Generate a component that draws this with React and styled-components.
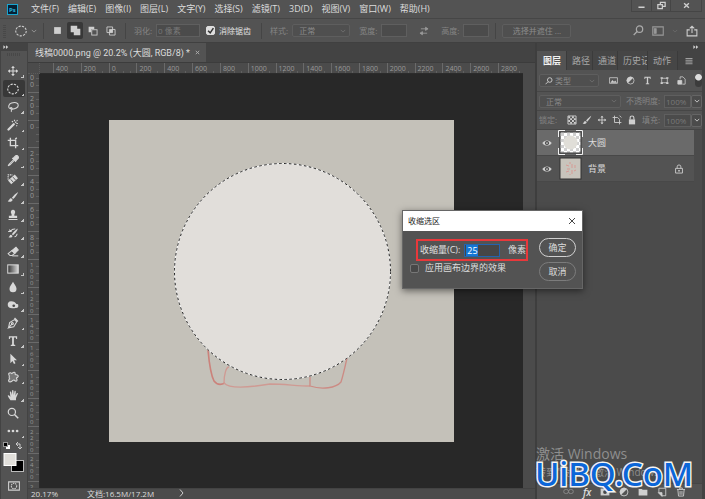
import React from 'react';
import styled, { createGlobalStyle } from 'styled-components';

const GlobalStyle = createGlobalStyle`
  * { box-sizing: border-box; }
  body {
    margin: 0;
    overflow: hidden;
    background: #535353;
    color: #dcdcdc;
    font-family: "Open Sans", "Noto Sans CJK SC", sans-serif;
    font-size: 9px;
    line-height: 12px;
  }
  button, input, select { font: inherit; color: inherit; margin: 0; padding: 0; }
  svg { display: block; flex: none; }
`;

/* shell */
const Shell = styled.div`
  height: 100vh;
  display: flex;
  flex-direction: column;
`;

const Main = styled.div`
  flex: 1;
  min-height: 0;
  display: flex;
  background: #434343;
`;

/* menu bar */
const MenuBar = styled.header`
  height: 19px;
  display: flex;
  align-items: center;
  padding-left: 7px;
  border-bottom: 1px solid #464646;
`;

const Menus = styled.nav`
  display: flex;
  gap: 9px;
  margin-left: 13px;
`;

const MenuItem = styled.button`
  border: 0;
  background: none;
  white-space: nowrap;
`;

const WindowButtons = styled.div`
  display: flex;
  align-self: flex-start;
  margin: 0 3px 0 auto;
  border: 1px solid #454545;
  border-top: 0;
`;

const WindowButton = styled.button`
  width: ${p => (p.$wide ? '31px' : '19px')};
  height: 11px;
  display: grid;
  place-items: center;
  border: 0;
  background: none;
  & + & { border-left: 1px solid #454545; }
`;

/* options bar */
const OptionsBar = styled.div`
  height: 24px;
  display: flex;
  align-items: center;
  padding: 0 6px 0 3px;
  border-bottom: 1px solid #404040;
  font-size: 8px;
  white-space: nowrap;
`;

const Grip = styled.span`
  width: ${p => (p.$across ? '14px' : '3px')};
  height: ${p => (p.$across ? '3px' : '14px')};
  background: repeating-linear-gradient(${p => (p.$across ? '90deg' : '0deg')}, #484848 0 1px, transparent 1px 2px);
`;

const Separator = styled.span`
  width: 1px;
  height: 16px;
  margin: 0 ${p => p.$right || 5}px 0 ${p => p.$left || 6}px;
  background: #454545;
`;

const Spacer = styled.span`
  width: ${p => p.$size || 9}px;
`;

const IconButton = styled.button`
  display: grid;
  place-items: center;
  width: ${p => p.$width || 16}px;
  height: 17px;
  border: 0;
  border-radius: 2px;
  background: ${p => (p.$on ? '#383838' : 'none')};
`;

const ButtonSet = styled.div`
  display: flex;
  align-items: center;
  gap: ${p => p.$gap || 2}px;
  margin-left: ${p => (p.$end ? 'auto' : 0)};
`;

const Label = styled.label`
  color: ${p => (p.$bright ? '#e0e0e0' : '#858585')};
  margin-right: 4px;
`;

const Field = styled.input`
  width: ${p => p.$width}px;
  height: 13px;
  padding-left: 1px;
  border: 1px solid #5f5f5f;
  background: #4b4b4b;
  color: #797979;
  outline: 0;
`;

const TickBox = styled.input`
  appearance: none;
  flex: none;
  width: 9px;
  height: 9px;
  border: 1px solid #777;
  border-radius: 2px;
  background: #484848;
  &:checked {
    border-color: #dedede;
    background: #dedede url("data:image/svg+xml,%3Csvg xmlns='http://www.w3.org/2000/svg' viewBox='0 0 8 8'%3E%3Cpath d='M1.5 4l2 2 3-4.500' fill='none' stroke='%23333' stroke-width='1.400'/%3E%3C/svg%3E") center / 8px no-repeat;
  }
`;

const SelectBox = styled.span`
  display: grid;
  align-items: center;
  width: ${p => p.$width}px;
  height: 13px;
  border: 1px solid #5e5e5e;
  border-radius: 2px;
  background: #4f4f4f;
  & > * { grid-area: 1 / 1; }
  & > svg { justify-self: end; margin-right: 3px; }
  & > svg:first-child:not(:last-child) { justify-self: start; margin-left: 5px; }
`;

const Select = styled.select`
  appearance: none;
  width: 100%;
  height: 11px;
  line-height: 11px;
  padding-left: ${p => p.$indent || 6}px;
  border: 0;
  background: none;
  color: #8b8b8b;
  font-size: 8px;
  opacity: 1;
`;

const MaskButton = styled.button`
  width: 69px;
  height: 14px;
  border: 1px solid #5e5e5e;
  border-radius: 2px;
  background: #4f4f4f;
  color: #8b8b8b;
`;

/* tool strip */
const ToolStrip = styled.aside`
  width: 27px;
  display: flex;
  flex-direction: column;
  align-items: center;
  background: #535353;
  border-left: 1px solid #434343;
  overflow: hidden;
`;

const StripHead = styled.div`
  align-self: stretch;
  height: 8px;
  margin-bottom: 2px;
  padding: 1px 2px;
  background: #434343;
`;

const Tools = styled.div`
  flex: 1;
  display: flex;
  flex-direction: column;
  justify-content: space-between;
  margin-top: 6px;
`;

const ToolButton = styled.button`
  width: 22px;
  height: 17px;
  display: grid;
  place-items: center;
  padding-right: 2px;
  border: 0;
  border-radius: 2px;
  background-color: ${p => (p.$on ? '#383838' : 'transparent')};
  background-image: linear-gradient(135deg, transparent 50%, #c5c5c5 50%);
  background-size: ${p => (p.$plain ? '0 0' : '3px 3px')};
  background-position: right 1px bottom 1px;
  background-repeat: no-repeat;
`;

const Swatches = styled.div`
  height: 60px;
  padding-top: 3px;
  display: flex;
  flex-direction: column;
  align-items: center;
  gap: 7px;
`;

/* document area */
const Workspace = styled.section`
  flex: 1;
  min-width: 0;
  display: flex;
  flex-direction: column;
  margin-left: 1px;
`;

const DocTabs = styled.div`
  height: 20px;
  display: flex;
  border-bottom: 1px solid #3c3c3c;
`;

const DocTab = styled.div`
  display: flex;
  align-items: center;
  gap: 5px;
  padding: 0 6px 0 7px;
  background: #535353;
  font-family: Roboto, "Noto Sans CJK SC", sans-serif;
  white-space: nowrap;
`;

const View = styled.div`
  flex: 1;
  min-height: 0;
  display: grid;
  grid-template: 11px 1fr 11px / 12px 1fr 12px;
  background: #4b4b4b;
`;

const RulerCorner = styled.div`
  border: 1px dotted #5c5c5c;
  border-width: 0 1px 1px 0;
`;

const TopRuler = styled.div`
  display: flex;
  overflow: hidden;
  border-bottom: 1px solid #2c2c2c;
  padding-left: 13px;
`;

const TopMark = styled.span`
  flex: none;
  width: calc((100% + 3px) / 17);
  padding-left: 2px;
  border-left: 1px solid #6a6a6a;
  color: #999;
  font-size: 7px;
  line-height: 11px;
  background: repeating-linear-gradient(90deg, transparent 0 6px, #606060 6px 7px) bottom / 100% 2px no-repeat;
`;

const SideRuler = styled.div`
  overflow: hidden;
  border-right: 1px solid #2c2c2c;
`;

const SideMarks = styled.div`
  display: flex;
  flex-direction: column;
  height: calc(100% + 31px);
  margin-top: -10px;
`;

const SideMark = styled.span`
  flex: 1;
  min-height: 0;
  display: flex;
  flex-direction: column;
  padding: 2px 0 0 2px;
  border-top: 1px solid #6a6a6a;
  color: #999;
  font-size: ${p => (p.$tight ? '6px' : '7px')};
  line-height: ${p => (p.$tight ? '6px' : '7px')};
  background: repeating-linear-gradient(transparent 0 6px, #606060 6px 7px) right / 3px 100% no-repeat;
`;

const Canvas = styled.div`
  display: grid;
  place-items: center;
  overflow: hidden;
  background: #282828;
`;

const StatusBar = styled.footer`
  grid-column: 1 / -1;
  display: flex;
  align-items: center;
  padding-left: 3px;
  border-top: 1px solid #434343;
  font-size: 8px;
  line-height: 10px;
`;

const StatusInfo = styled.span`
  display: flex;
  justify-content: space-between;
  width: 99px;
  margin-left: 29px;
`;

/* right panel */
const Panel = styled.aside`
  width: 170px;
  display: flex;
  flex-direction: column;
  border-left: 2px solid #3e3e3e;
  border-right: 3px solid #434343;
  background: #4b4b4b;
`;

const PanelHead = styled.div`
  height: 8px;
  display: flex;
  justify-content: flex-end;
  padding: 1px 3px;
  background: #434343;
`;

const PanelTabs = styled.div`
  height: 19px;
  display: flex;
  align-items: center;
  background: #434343;
`;

const PanelTab = styled.button`
  width: ${p => p.$width}px;
  height: 19px;
  padding-left: ${p => (p.$on ? 6 : 5)}px;
  border: 0;
  border-right: 1px solid #3b3b3b;
  background: ${p => (p.$on ? '#535353' : '#464646')};
  color: ${p => (p.$on ? '#f0f0f0' : '#a8a8a8')};
  font-weight: ${p => (p.$on ? 600 : 400)};
  text-align: left;
  white-space: nowrap;
  overflow: hidden;
`;

const PanelRow = styled.div`
  height: ${p => (p.$tall ? 22 : 19)}px;
  display: flex;
  align-items: center;
  justify-content: space-between;
  padding-left: 2px;
  border-bottom: 1px solid #464646;
  background: #535353;
  font-size: 8px;
  white-space: nowrap;
`;

const Amount = styled.div`
  display: flex;
  align-items: center;
`;

const DropButton = styled.button`
  width: 11px;
  height: 13px;
  display: grid;
  place-items: center;
  border: 1px solid #656565;
  border-radius: 2px;
  background: #4b4b4b;
`;

const FilterSwitch = styled.input`
  appearance: none;
  width: 7px;
  height: 13px;
  border-radius: 4px;
  background: radial-gradient(circle at 50% 3px, #ddd 3px, transparent 4px) #3c3c3c;
`;

const LayerList = styled.ul`
  flex: 1;
  margin: 0;
  padding: 0 8px 0 0;
  list-style: none;
`;

const Layer = styled.li`
  height: 26px;
  display: flex;
  align-items: center;
  padding: 0 10px 0 4px;
  border-bottom: 1px solid #484848;
  background: ${p => (p.$on ? '#6a6a6a' : '#535353')};
  & > span { margin: 0 auto 0 5px; }
`;

const EyeButton = styled(IconButton)`
  width: 11px;
  margin-right: 6px;
`;

const PanelFooter = styled.div`
  height: 16px;
  display: flex;
  align-items: center;
  justify-content: space-between;
  padding: 0 16px 0 26px;
  border-top: 1px solid #454545;
  background: #535353;
  & > i { font-size: 10px; font-weight: 600; }
`;

/* contract-selection dialog */
const Dialog = styled.form`
  position: absolute;
  left: 402px;
  top: 210px;
  width: 181px;
  border: 1px solid #666;
  background: #535353;
  box-shadow: 0 2px 7px rgba(0, 0, 0, 0.5);
`;

const DialogTitle = styled.div`
  height: 20px;
  display: flex;
  align-items: center;
  justify-content: space-between;
  padding: 0 6px 0 5px;
  background: #fff;
  color: #222;
  font-size: 8px;
`;

const DialogBody = styled.div`
  height: 57px;
  display: flex;
  justify-content: space-between;
  padding: 7px 6px 0 7px;
`;

const DialogButtons = styled.div`
  display: flex;
  flex-direction: column;
  gap: 5px;
`;

const PillButton = styled.button`
  width: 37px;
  height: 19px;
  border: 1px solid ${p => (p.$main ? '#d0d0d0' : '#7c7c7c')};
  border-radius: 10px;
  background: none;
`;

const AmountBox = styled.div`
  height: 22px;
  width: 112px;
  display: flex;
  align-items: center;
  margin: 1px 0 0 6px;
  padding-left: 2px;
  border: 2px solid #e8383b;
  & > span { margin-left: auto; }
`;

const AmountField = styled.input`
  width: 36px;
  height: 13px;
  padding-left: 2px;
  border: 1px solid #2463ae;
  background: linear-gradient(#1477d4, #1477d4) 1px 50% / 12px 11px no-repeat #464646;
  color: #fff;
  outline: 0;
`;

const TickRow = styled.div`
  display: flex;
  align-items: center;
  gap: 6px;
  margin-top: 1px;
`;

/* overlays */
const Activation = styled.div`
  position: absolute;
  left: 536px;
  top: 444px;
  color: rgba(190, 190, 190, 0.6);
  font-size: 14px;
  line-height: 19px;
  & > small { display: block; font-size: 10px; }
`;

const SiteMark = styled.div`
  position: absolute;
  left: 535px;
  top: 453px;
  color: #0b66d8;
  font-family: "Noto Sans", "Open Sans", sans-serif;
  font-size: 33px;
  font-weight: 500;
  line-height: 42px;
  -webkit-text-stroke: 3px #f4f4f4;
  paint-order: stroke fill;
  white-space: nowrap;
`;

const S = { fill: 'none', stroke: 'currentColor', strokeWidth: 1.4 };

const glyphs = {
  move: <g {...S}><path d="M8 2v12M2 8h12" /><path d="M5.500 4L8 1.200 10.500 4zM5.500 12L8 14.800 10.500 12zM4 5.500L1.200 8 4 10.500zM12 5.500L14.800 8 12 10.500z" fill="currentColor" strokeWidth="0" /></g>,
  ellipse: <ellipse cx="8" cy="8" rx="7" ry="6.500" {...S} strokeDasharray="3 1.600" />,
  lasso: <g {...S}><path d="M4.500 10.500C1 9 1.500 4.500 6 2.800s9-.500 9 2.700-4 5.500-8.500 5.300c-1.500 0-2.600-1-1.600-1.800s2.600.600 1.600 2.200-1.500 2.300-.500 3.300" /></g>,
  wand: <g {...S}><path d="M2 14L9 7" strokeWidth="3" strokeLinecap="round" /><path d="M11 5l1.500-1.500M10 1v2M14.500 6h-2M6.500 3l1.500 1M14 1.500l-1 1M13.500 9.500l-1-1" strokeWidth="1.600" /></g>,
  crop: <g {...S} strokeWidth="1.800"><path d="M4.500 1v10.500H15M1 4.500h10.500V15M13 1l-2 2" /></g>,
  dropper: <g {...S}><path d="M9 6l-6 6-1.500 2.500L4 13l6-6" /><path d="M7.500 4.500l4 4 1-1.500 2-2a2 2 0 0 0-3.500-3.500l-2 2z" fill="currentColor" /></g>,
  heal: <g {...S}><path d="M1.500 9V2.500h6" strokeDasharray="2 1" /><path d="M3.500 12.500L12.500 4.500" strokeWidth="6.500" /><path d="M5 8.500l3.500 4M8 5.500l3.500 4" stroke="#535353" strokeWidth="1.200" /></g>,
  brush: <g fill="currentColor"><path d="M14.800 1.200C12 3 8.500 6 6.500 9l1.800 1.600C11 8 14 4 14.800 1.200zM5.600 9.800C3 9.500 3.500 12.500 1 13.500c2.500 1.500 6 .800 6.500-2z" /></g>,
  stamp: <g fill="currentColor"><path d="M8 1a3 3 0 0 0-2.500 4.500C6.200 6.600 6.500 8 6 9H2.500v3h11V9H10c-.500-1-.200-2.400.500-3.500A3 3 0 0 0 8 1zM2 13.200h12v1.600H2z" /></g>,
  history: <g><path d="M14.500 2C11 4 8 7 6.500 9.500L8 11c3-2.500 5.500-5.500 6.500-9zM5.500 10.200C3.500 10 4 12.500 2 13.500c2.500 1 5 .500 5.300-1.600z" fill="currentColor" /><path d="M1.500 6h3.800L3 3.500M5 5.500c1-2 3-3 6-2.800M10 13c2 0 3-1.500 3.500-4" {...S} /></g>,
  eraser: <g {...S}><path d="M1.500 11.500l5-4 4 3.500-3.500 3H4z" /><path d="M6.500 7.500L12 3l3 3.500-4.500 4.500z" fill="currentColor" /><path d="M7 14.500h8" /></g>,
  gradient: <g><defs><linearGradient id="fade"><stop offset="0" stopColor="#333" /><stop offset="1" stopColor="#d8d8d8" /></linearGradient></defs><rect x="1" y="2.500" width="14" height="11" fill="url(#fade)" stroke="currentColor" strokeWidth="1.400" /></g>,
  drop: <path d="M8 1C6.500 4 3.300 7 3.300 10.300a4.700 4.700 0 0 0 9.400 0C12.700 7 9.500 4 8 1z" fill="currentColor" />,
  sponge: <g><path d="M5.500 3C2 3 .800 5.500 1 8c.200 3 3 4.500 6.500 4.300 3 0 7.500-.300 7.500-2.300V8c0-1-1-1.300-2.500-1.300C11.500 4.500 9 3 5.500 3z" fill="currentColor" /><circle cx="9" cy="9" r="1.800" fill="#484848" /></g>,
  pen: <g {...S}><path d="M2 14.500l1.500-7L10 3.500l3 3L9 13l-7 1.500 4.500-5" /><circle cx="7.200" cy="8.800" r="1.300" /><path d="M10 1.500L14.500 6" strokeWidth="2" /></g>,
  type: <path d="M2.500 1.500h11v3.800h-1.300l-.500-2H9.200v9.400l1.800.500v1.300H5v-1.300l1.800-.500V3.300H4.300l-.500 2H2.500z" fill="currentColor" />,
  arrow: <path d="M4.500 1v12.500l2.800-2.800 2 4 2-1-2-3.900h4z" fill="currentColor" />,
  shape: <path d="M2.500 5c-1-2.500 2-3.500 4-1.500C8 2 9 .800 10.500 2c1 1-.500 2.500 1 3 3-.500 4.500 2 2.500 3.500-2.500.500-1 2-.500 3.500-.500 2.500-3 1.500-4 0-2-.500-2 2.500-5 2.500s-3-2.500-1-4C2 9 4 7.500 2.500 5z" {...S} fill="#777" />,
  hand: <path d="M4.500 15C3.500 12 1 10.500 1 8.500c1.500-.800 2.500.500 3.500 2L3.800 4c.8-1.200 1.800-.500 2 .5L6.500 8l.300-6c.700-1.300 1.700-.700 1.800.300L9 8l1-5c.800-1 1.800-.500 1.700.5L11.300 9l1.700-3.500c1-.800 1.800 0 1.400 1L12 12v3z" fill="currentColor" />,
  zoom: <g {...S} strokeWidth="1.600"><circle cx="6.500" cy="6.500" r="4.800" /><path d="M10 10l5 5" strokeWidth="2" /></g>,
  find: <g {...S} strokeWidth="1.800"><circle cx="9.500" cy="6" r="4.600" /><path d="M6 9.500L1 14.500" /></g>,
  more: <g fill="currentColor"><circle cx="2.500" cy="8" r="1.800" /><circle cx="8" cy="8" r="1.800" /><circle cx="13.500" cy="8" r="1.800" /></g>,
  chevron: <path d="M2 5l6 6 6-6" {...S} strokeWidth="2.400" />,
  next: <path d="M4 1l6 7-6 7" {...S} strokeWidth="2" />,
  collapse: <path d="M1 3v10l6-5zM8 3v10l6-5z" fill="currentColor" />,
  close: <path d="M2 2l12 12M14 2L2 14" {...S} strokeWidth="1.800" />,
  closeBold: <path d="M2.500 3l11 10M13.500 3l-11 10" {...S} strokeWidth="3.200" />,
  minimise: <path d="M1 12h14" {...S} strokeWidth="3.500" />,
  restore: <g {...S} strokeWidth="2.200"><path d="M1.500 6.500h8v7h-8zM6 6V2.500h8.500v7H10" /></g>,
  newSel: <rect x="2" y="2" width="12" height="12" fill="currentColor" />,
  addSel: <path d="M1 1h9.500v4.500H15V15H5.500v-4.500H1z" fill="currentColor" />,
  subSel: <g><path d="M1 1h9v4H5v5H1z" fill="currentColor" /><rect x="6" y="6" width="8.500" height="8.500" {...S} /></g>,
  crossSel: <g><path d="M1.500 1.500h9v9h-9zM5.500 5.500h9v9h-9z" {...S} /><path d="M6 6h4.500v4.500H6z" fill="currentColor" /></g>,
  swap: <path d="M3 4.500h8M13 11.500H5M10.500 2L14.500 4.500 10.500 7zM5.500 9L1.500 11.500 5.500 14z" {...S} fill="currentColor" />,
  layout: <g {...S}><path d="M1 2.500h14v11H1z" /><path d="M3 5h2.500v6H3z" fill="currentColor" /></g>,
  share: <g {...S}><path d="M5 6.500H1.500v8h13v-8H11M8 10.500V2M5 4.500l3-3 3 3" /></g>,
  image: <g {...S}><path d="M1 3h14v10H1z" /><path d="M2.500 12l3.500-5 3 3 2-2 3 4z" fill="currentColor" stroke="none" /></g>,
  adjust: <g><circle cx="8" cy="8" r="6.300" {...S} /><path d="M12.500 3.500a6.300 6.300 0 0 0-9 9z" fill="currentColor" /></g>,
  frame: <g {...S}><path d="M3 4h10v8H3z" /><path d="M1 2h4v3H1zM11 2h4v3h-4zM1 11h4v3H1zM11 11h4v3h-4z" fill="currentColor" strokeWidth="0" /></g>,
  smart: <g {...S}><path d="M5.500 6V1.500h5l4 4v9h-5" /><path d="M1.500 8h7v6.500h-7z" fill="currentColor" /></g>,
  pixels: <g><path d="M1.500 1.500h13v13h-13z" {...S} /><path d="M2 2h3v3H2zM8 2h3v3H8zM5 5h3v3H5zM11 5h3v3h-3zM2 8h3v3H2zM8 8h3v3H8zM5 11h3v3H5zM11 11h3v3h-3z" fill="currentColor" /></g>,
  artboard: <g {...S}><path d="M4 1v11h11M1 4h8l3 3v8" /><path d="M12 1l3 3" /></g>,
  lock: <g><path d="M3 7h10v8H3z" fill="currentColor" /><path d="M5 7V4.500a3 3 0 0 1 6 0V7" {...S} strokeWidth="1.800" /></g>,
  lockLine: <g {...S}><path d="M2.500 7h11v7.500h-11zM5 7V4.500a3 3 0 0 1 6 0V7" /><path d="M8 9.500V12" strokeWidth="2.500" /></g>,
  eye: <g><path d="M.500 8C4 2.500 12 2.500 15.500 8 12 13.500 4 13.500.500 8z" fill="currentColor" /><circle cx="8" cy="8" r="3.300" fill="#444" /><circle cx="8" cy="8" r="1.400" fill="currentColor" /></g>,
  link: <g {...S}><rect x="1" y="5" width="7" height="6" rx="3" /><rect x="8" y="5" width="7" height="6" rx="3" /></g>,
  mask: <g><path d="M1 2.500h14v11H1z" fill="currentColor" /><circle cx="8" cy="8" r="3" fill="#484848" /></g>,
  folder: <path d="M1 3h5l1.500 1.500H15V13.500H1z" fill="currentColor" />,
  page: <g {...S}><path d="M3 2h11v12H8M3 2v7" /><path d="M2 9h6v6z" fill="currentColor" /></g>,
  trash: <g {...S}><path d="M3 4.500l1 10h8l1-10M1.500 4h13M6 3.500V1.500h4v2M6.500 6.500v6M9.500 6.500v6" /></g>,
  lines: <path d="M1 3h14M1 6.500h14M1 10h14M1 13.500h14" {...S} strokeWidth="1.800" />,
  quickMask: <g {...S}><path d="M.800 2.500h14.400v11H.800z" /><circle cx="8" cy="8" r="3.600" strokeDasharray="2 1" /></g>,
};

function Icon({ name, size = 11, color = '#cfcfcf' }) {
  return (
    <svg width={size} height={size} viewBox="0 0 16 16" color={color} aria-hidden="true">
      {glyphs[name]}
    </svg>
  );
}

const menus = ['文件(F)', '编辑(E)', '图像(I)', '图层(L)', '文字(Y)', '选择(S)', '滤镜(T)', '3D(D)', '视图(V)', '窗口(W)', '帮助(H)'];
const tools = ['move', 'ellipse', 'lasso', 'wand', 'crop', 'dropper', 'heal', 'brush', 'stamp', 'history', 'eraser', 'gradient', 'drop', 'sponge', 'pen', 'type', 'arrow', 'shape', 'hand', 'zoom', 'more'];
const topMarks = [400, 200, 0, 200, 400, 600, 800, 1000, 1200, 1400, 1600, 1800, 2000, 2200, 2400, 2600, 2800];
const sideMarks = topMarks.slice(0, 16);

function Logo() {
  return (
    <svg width="11" height="11" viewBox="0 0 11 11" aria-label="Ps">
      <rect x="0.500" y="0.500" width="10" height="10" fill="#062033" stroke="#19a5cf" />
      <text x="2" y="8" fill="#27b6e0" fontSize="6" fontWeight="700">Ps</text>
    </svg>
  );
}

function Artwork() {
  return (
    <svg width="345" height="322" viewBox="0 0 345 322">
      <rect width="345" height="322" fill="#c4c1b9" />
      <g fill="none" stroke="#cf9a93" strokeWidth="1.300">
        <path d="M99 230c1 11 2 23 6 31 3 4 7 4 11 2" stroke="#cb827b" strokeWidth="1.600" />
        <path d="M120 247c-3 0-5 8-5 16 5 6 22 5 46 1 15 0 27 2 40 2" />
        <path d="M201 257v9c12 4 26 2 31-4 2-6 4-15 6-24" stroke="#cc8b84" />
      </g>
      <circle cx="173.500" cy="151.500" r="108" fill="#e1deda" stroke="#f5f5f5" />
      <circle cx="173.500" cy="151.500" r="108" fill="none" stroke="#222" strokeDasharray="2.500 2.500" />
    </svg>
  );
}

function LayerThumb({ active }) {
  return active ? (
    <svg width="25" height="25" viewBox="0 0 25 25">
      <defs>
        <pattern id="check" width="6" height="6" patternUnits="userSpaceOnUse">
          <path d="M0 0h6v6H0z" fill="#fff" />
          <path d="M0 0h3v3H0zM3 3h3v3H3z" fill="#cfcfcf" />
        </pattern>
      </defs>
      <rect x="2" y="2" width="21" height="21" fill="url(#check)" stroke="#333" />
      <circle cx="12.500" cy="12.500" r="7" fill="#e0ded8" />
      <path d="M.500 7V.500H7M18 .500h6.500V7M24.500 18v6.500H18M7 24.500H.500V18" fill="none" stroke="#f0f0f0" />
    </svg>
  ) : (
    <svg width="25" height="25" viewBox="0 0 25 25">
      <rect x="2" y="2" width="21" height="21" fill="#c8c4bc" stroke="#333" />
      <path d="M8 9l3 1M9 13h3M12 6v2M14 8v4M8 16l3-1M14 14v4M17 9v3M16 15l2-1M12 18v1" fill="none" stroke="#d79a94" />
    </svg>
  );
}

function DropDown({ width, label, value, icon, indent }) {
  return (
    <SelectBox $width={width}>
      {icon && <Icon name={icon} size={8} />}
      <Select aria-label={label} $indent={indent} disabled><option>{value}</option></Select>
      <Icon name="chevron" size={6} color="#6f6f6f" />
    </SelectBox>
  );
}

function PanelAmount({ id, label }) {
  return (
    <Amount>
      <Label htmlFor={id}>{label}</Label>
      <Field id={id} $width={27} defaultValue="100%" />
      <DropButton type="button" aria-label={label}><Icon name="chevron" size={6} /></DropButton>
    </Amount>
  );
}

export default function App() {
  return (
    <Shell>
      <GlobalStyle />
      <MenuBar>
        <Logo />
        <Menus>{menus.map(m => <MenuItem key={m}>{m}</MenuItem>)}</Menus>
        <WindowButtons>
          <WindowButton aria-label="最小化"><Icon name="minimise" size={7} /></WindowButton>
          <WindowButton aria-label="还原"><Icon name="restore" size={9} /></WindowButton>
          <WindowButton $wide aria-label="关闭"><Icon name="closeBold" size={7} /></WindowButton>
        </WindowButtons>
      </MenuBar>

      <OptionsBar>
        <Grip />
        <Spacer />
        <Icon name="ellipse" size={12} />
        <IconButton $width={14}><Icon name="chevron" size={6} color="#999" /></IconButton>
        <Separator $left={2} />
        <ButtonSet>
          <IconButton><Icon name="newSel" size={9} /></IconButton>
          <IconButton $on><Icon name="addSel" size={11} /></IconButton>
          <IconButton><Icon name="subSel" size={10} /></IconButton>
          <IconButton><Icon name="crossSel" size={10} /></IconButton>
        </ButtonSet>
        <Separator $right={8} />
        <Label htmlFor="feather">羽化:</Label>
        <Field id="feather" $width={44} defaultValue="0 像素" />
        <Spacer $size={6} />
        <TickBox type="checkbox" id="alias" defaultChecked />
        <Spacer $size={4} />
        <Label htmlFor="alias" $bright>消除锯齿</Label>
        <Separator $right={8} />
        <Label as="span">样式:</Label>
        <DropDown width={58} label="样式" value="正常" />
        <Spacer />
        <Label htmlFor="w">宽度:</Label>
        <Field id="w" $width={26} />
        <IconButton $width={34}><Icon name="swap" size={10} color="#999" /></IconButton>
        <Label htmlFor="h">高度:</Label>
        <Field id="h" $width={26} />
        <Separator $right={6} />
        <MaskButton>选择并遮住 ...</MaskButton>
        <ButtonSet $gap={7} $end>
          <Icon name="find" size={11} color="#aaa" />
          <IconButton $width={14}><Icon name="layout" size={12} color="#999" /></IconButton>
          <Icon name="chevron" size={6} color="#6a6a6a" />
          <IconButton $width={14}><Icon name="share" size={12} /></IconButton>
        </ButtonSet>
      </OptionsBar>

      <Main>
        <ToolStrip>
          <StripHead><Icon name="collapse" size={6} /></StripHead>
          <Grip $across />
          <Tools>
            {tools.map(t => (
              <ToolButton key={t} $on={t === 'ellipse'} $plain={t === 'zoom'} aria-label={t}>
                <Icon name={t} size={12} color="#d8d8d8" />
              </ToolButton>
            ))}
          </Tools>
          <Swatches>
            <svg width="23" height="31" viewBox="0 0 23 31">
              <rect x="3" y="3" width="4" height="4" fill="#fff" />
              <rect x="0.500" y="0.500" width="4" height="4" fill="#000" stroke="#999" />
              <path d="M14 2h3v4M15 0l-2 2 2 2M15 5l2 2 2-2" fill="none" stroke="#ccc" />
              <rect x="8.500" y="18.500" width="12" height="11" fill="#000" stroke="#bbb" />
              <rect x="1" y="11.500" width="12" height="12" fill="#e1dfda" stroke="#fff" />
            </svg>
            <Icon name="quickMask" size={12} />
            <Icon name="layout" size={12} />
          </Swatches>
        </ToolStrip>

        <Workspace>
          <DocTabs>
            <DocTab>
              <span>线稿0000.png @ 20.2% (大圆, RGB/8) *</span>
              <Icon name="closeBold" size={5} color="#aaa" />
            </DocTab>
          </DocTabs>
          <View>
            <RulerCorner />
            <TopRuler>{topMarks.map((m, i) => <TopMark key={i}>{m}</TopMark>)}</TopRuler>
            <span />
            <SideRuler>
              <SideMarks>
                {sideMarks.map((m, i) => (
                  <SideMark key={i} $tight={m > 999}>
                    {String(m).split('').map((d, j) => <span key={j}>{d}</span>)}
                  </SideMark>
                ))}
              </SideMarks>
            </SideRuler>
            <Canvas><Artwork /></Canvas>
            <span />
            <StatusBar>
              <span>20.17%</span>
              <StatusInfo>
                <span>文档:16.5M/17.2M</span>
                <Icon name="next" size={8} />
              </StatusInfo>
            </StatusBar>
          </View>
        </Workspace>

        <Panel>
          <PanelHead><svg width="6" height="6" viewBox="0 0 16 16" color="#cfcfcf">{glyphs.collapse}</svg></PanelHead>
          <PanelTabs>
            <PanelTab $on $width={30}>图层</PanelTab>
            <PanelTab $width={26}>路径</PanelTab>
            <PanelTab $width={25}>通道</PanelTab>
            <PanelTab $width={30}>历史记录</PanelTab>
            <PanelTab $width={30}>动作</PanelTab>
            <IconButton $width={22}><Icon name="lines" size={8} color="#aaa" /></IconButton>
          </PanelTabs>
          <PanelRow $tall>
            <DropDown width={60} label="类型" value="类型" icon="find" indent={15} />
            <ButtonSet $gap={6}>
              {['image', 'adjust', 'type', 'frame', 'smart'].map(n => (
                <IconButton key={n} $width={11}><Icon name={n} size={9} /></IconButton>
              ))}
            </ButtonSet>
            <FilterSwitch type="checkbox" aria-label="过滤" />
          </PanelRow>
          <PanelRow>
            <DropDown width={82} label="模式" value="正常" />
            <PanelAmount id="opacity" label="不透明度:" />
          </PanelRow>
          <PanelRow>
            <Label as="span">锁定:</Label>
            <ButtonSet $gap={4}>
              {['pixels', 'brush', 'move', 'artboard', 'lock'].map(n => (
                <IconButton key={n} $width={11}><Icon name={n} size={10} /></IconButton>
              ))}
            </ButtonSet>
            <PanelAmount id="fill" label="填充:" />
          </PanelRow>
          <LayerList>
            <Layer $on>
              <EyeButton aria-label="可见"><Icon name="eye" size={10} /></EyeButton>
              <LayerThumb active />
              <span>大圆</span>
            </Layer>
            <Layer>
              <EyeButton aria-label="可见"><Icon name="eye" size={10} /></EyeButton>
              <LayerThumb />
              <span>背景</span>
              <Icon name="lockLine" size={10} />
            </Layer>
          </LayerList>
          <PanelFooter>
            <Icon name="link" size={11} color="#888" />
            <i>fx</i>
            {['mask', 'adjust', 'folder', 'page', 'trash'].map(n => <Icon key={n} name={n} size={10} />)}
          </PanelFooter>
        </Panel>
      </Main>

      <Activation>激活 Windows<small>转到"设置"以激活 Windows。</small></Activation>
      <SiteMark>UiBQ.CoM</SiteMark>

      <Dialog>
        <DialogTitle>收缩选区<Icon name="close" size={8} color="#333" /></DialogTitle>
        <DialogBody>
          <div>
            <AmountBox>
              <Label htmlFor="contract" $bright>收缩量(C):</Label>
              <AmountField id="contract" defaultValue="25" />
              <span>像素</span>
            </AmountBox>
            <TickRow>
              <TickBox type="checkbox" id="bounds" />
              <label htmlFor="bounds">应用画布边界的效果</label>
            </TickRow>
          </div>
          <DialogButtons>
            <PillButton type="button" $main>确定</PillButton>
            <PillButton type="button">取消</PillButton>
          </DialogButtons>
        </DialogBody>
      </Dialog>
    </Shell>
  );
}
